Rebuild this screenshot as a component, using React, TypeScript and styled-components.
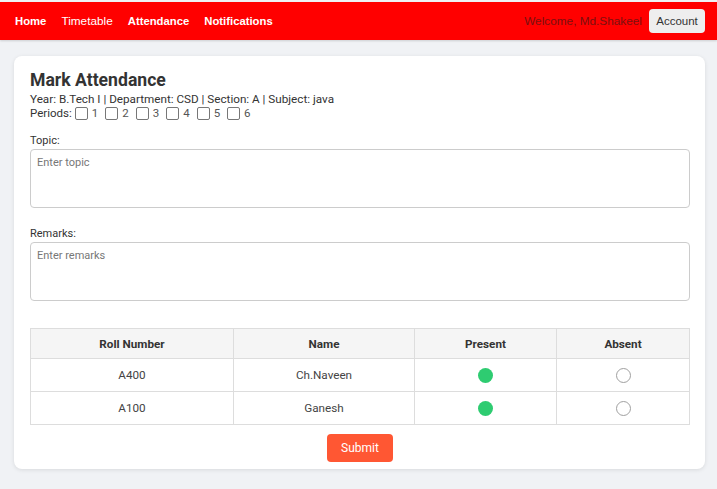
import React, { useState } from "react";
import styled, { createGlobalStyle } from "styled-components";

const GlobalStyle = createGlobalStyle`
  html, body {
    margin: 0;
    padding: 0;
    background: #f0f2f5;
  }
  body {
    padding-top: 2px;
    font-family: Roboto, "Liberation Sans", sans-serif;
    color: #333;
  }
  * {
    box-sizing: border-box;
  }
`;

interface Student {
  roll: string;
  name: string;
}

const students: Student[] = [
  { roll: "A400", name: "Ch.Naveen" },
  { roll: "A100", name: "Ganesh" },
];

export default function App() {
  const [status, setStatus] = useState<Record<string, "present" | "absent">>({
    A400: "present",
    A100: "present",
  });

  return (
    <>
      <GlobalStyle />
      <Nav>
        <NavLinks>
          <NavLink $bold>Home</NavLink>
          <NavLink>Timetable</NavLink>
          <NavLink $bold>Attendance</NavLink>
          <NavLink $bold>Notifications</NavLink>
        </NavLinks>
        <NavRight>
          <Welcome>Welcome, Md.Shakeel</Welcome>
          <AccountBtn>Account</AccountBtn>
        </NavRight>
      </Nav>
      <Page>
        <Card>
          <Title>Mark Attendance</Title>
          <Info>Year: B.Tech I | Department: CSD | Section: A | Subject: java</Info>
          <Periods>
            Periods:
            {[1, 2, 3, 4, 5, 6].map((p) => (
              <PeriodItem key={p}>
                <Check type="checkbox" />
                {p}
              </PeriodItem>
            ))}
          </Periods>
          <Field $top={14}>
            <Label>Topic:</Label>
            <TextArea placeholder="Enter topic" />
          </Field>
          <Field $top={19}>
            <Label>Remarks:</Label>
            <TextArea placeholder="Enter remarks" />
          </Field>
          <Table>
            <thead>
              <tr>
                <Th style={{ width: 203 }}>Roll Number</Th>
                <Th style={{ width: 181 }}>Name</Th>
                <Th style={{ width: 142 }}>Present</Th>
                <Th>Absent</Th>
              </tr>
            </thead>
            <tbody>
              {students.map((s) => (
                <tr key={s.roll}>
                  <Td>{s.roll}</Td>
                  <Td>{s.name}</Td>
                  <Td>
                    <Radio
                      $on={status[s.roll] === "present"}
                      onClick={() => setStatus((prev) => ({ ...prev, [s.roll]: "present" }))}
                    />
                  </Td>
                  <Td>
                    <Radio
                      $on={status[s.roll] === "absent"}
                      onClick={() => setStatus((prev) => ({ ...prev, [s.roll]: "absent" }))}
                    />
                  </Td>
                </tr>
              ))}
            </tbody>
          </Table>
          <Actions>
            <SubmitBtn>Submit</SubmitBtn>
          </Actions>
        </Card>
      </Page>
    </>
  );
}

const Nav = styled.nav`
  height: 38px;
  background: #ff0000;
  display: flex;
  align-items: center;
  justify-content: space-between;
  padding: 0 12px 0 15px;
  box-shadow: 0 1px 2px rgba(0, 0, 0, 0.15);
  font-family: "Liberation Sans", Arial, sans-serif;
  font-size: 11.3px;
`;

const NavLinks = styled.div`
  display: flex;
  align-items: center;
  gap: 15px;
`;

const NavLink = styled.a<{ $bold?: boolean }>`
  color: #fff;
  font-weight: ${(p) => (p.$bold ? 700 : 400)};
  font-size: ${(p) => (p.$bold ? "11.3px" : "11.8px")};
  cursor: pointer;
`;

const NavRight = styled.div`
  display: flex;
  align-items: center;
  gap: 7px;
`;

const Welcome = styled.span`
  color: #7a1010;
  font-size: 11.8px;
`;

const AccountBtn = styled.button`
  height: 24px;
  width: 56px;
  padding: 0;
  border: 0;
  border-radius: 4px;
  background: #eeeeee;
  color: #333;
  font-family: "Liberation Sans", Arial, sans-serif;
  font-size: 11.5px;
  cursor: pointer;
`;

const Page = styled.main`
  padding: 16px 12px 20px 14px;
`;

const Card = styled.section`
  background: #fff;
  border-radius: 8px;
  box-shadow: 0 1px 4px rgba(0, 0, 0, 0.1);
  padding: 12px 15px 7px 16px;
`;

const Title = styled.h2`
  margin: 0;
  font-size: 17.6px;
  line-height: 24px;
  font-weight: 700;
  color: #333;
`;

const Info = styled.div`
  font-size: 11.7px;
  line-height: 14px;
  color: #333;
`;

const Periods = styled.div`
  display: flex;
  align-items: center;
  font-size: 11.5px;
  line-height: 14px;
  color: #333;
`;

const PeriodItem = styled.label`
  display: inline-flex;
  align-items: center;
  gap: 4px;
  color: #555;
  margin: 0 4px 0 3px;
`;

const Check = styled.input`
  appearance: none;
  width: 13px;
  height: 13px;
  margin: 0;
  border: 1px solid #777;
  border-radius: 2px;
  background: #fff;
`;

const Field = styled.div<{ $top: number }>`
  margin-top: ${(p) => p.$top}px;
`;

const Label = styled.label`
  display: block;
  font-size: 11px;
  line-height: 13px;
  color: #333;
  margin-bottom: 2px;
`;

const TextArea = styled.textarea`
  display: block;
  width: 100%;
  height: 59px;
  resize: none;
  border: 1px solid #ccc;
  border-radius: 4px;
  padding: 6px;
  font-family: Roboto, sans-serif;
  font-size: 11px;
  margin: 0;
  &::placeholder {
    color: #777;
  }
`;

const Table = styled.table`
  width: 100%;
  border-collapse: collapse;
  margin-top: 27px;
  font-size: 11.7px;
`;

const Th = styled.th`
  height: 30px;
  background: #f5f5f5;
  border: 1px solid #ddd;
  font-weight: 700;
  color: #333;
`;

const Td = styled.td`
  height: 33px;
  border: 1px solid #ddd;
  text-align: center;
  color: #444;
  vertical-align: middle;
`;

const Radio = styled.span<{ $on: boolean }>`
  display: inline-block;
  vertical-align: middle;
  width: 15px;
  height: 15px;
  border-radius: 50%;
  background: ${(p) => (p.$on ? "#2ecc71" : "#fff")};
  border: ${(p) => (p.$on ? "none" : "1.5px solid #a0a0a0")};
  cursor: pointer;
`;

const Actions = styled.div`
  display: flex;
  justify-content: center;
  margin-top: 9px;
`;

const SubmitBtn = styled.button`
  height: 28px;
  width: 66px;
  padding: 0;
  border: 0;
  border-radius: 4px;
  background: #ff5733;
  color: #fff;
  font-family: Roboto, sans-serif;
  font-size: 12px;
  cursor: pointer;
`;
